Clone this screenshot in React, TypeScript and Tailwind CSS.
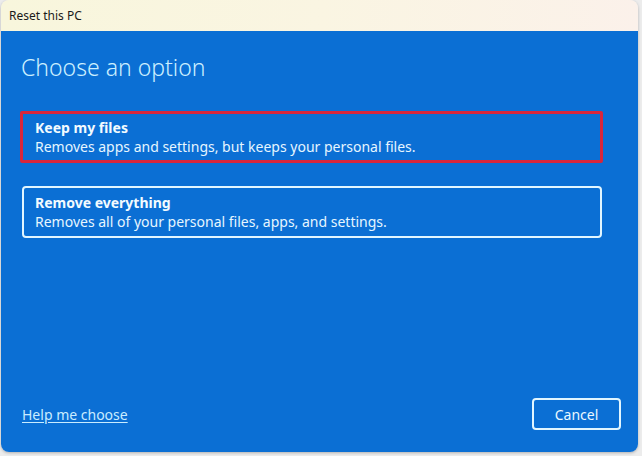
import React from 'react';

const font = { fontFamily: '"Noto Sans", "Open Sans", sans-serif' };

type OptionProps = {
  title: string;
  description: string;
  selected?: boolean;
};

// One choice card in the dialog
const OptionCard: React.FC<OptionProps> = ({ title, description, selected }) => (
  <button
    className={
      selected
        ? 'w-[583px] h-[52px] -ml-px text-left flex flex-col justify-center pl-[12px] border-[3px] border-[#d8263c] rounded-[2px]'
        : 'w-[580px] h-[52px] ml-px text-left flex flex-col justify-center pl-[11px] border-2 border-[#e2f6ff] rounded-[4px]'
    }
  >
    <span className="text-[14px] leading-[19px] font-bold text-[#f2fbff]">{title}</span>
    <span className="text-[14px] leading-[19px] text-[#e6f6ff]">{description}</span>
  </button>
);

export default function App() {
  return (
    <div className="w-[642px] h-[456px] bg-[#ececec] overflow-hidden" style={font}>
      <div className="ml-px w-[637px] h-[452px] flex flex-col rounded-t-[8px] rounded-b-[8px] overflow-hidden shadow-[0_1px_3px_rgba(0,0,0,0.25)]">
        {/* Title bar */}
        <div className="h-[31px] flex items-center pl-[8px] bg-gradient-to-r from-[#f8f6dc] via-[#faf5e2] to-[#fbf1ea]">
          <span className="text-[12px] text-[#1a1a1a]">Reset this PC</span>
        </div>

        {/* Dialog body */}
        <div className="flex-1 bg-[#0b6fd4] flex flex-col">
          <div className="px-[20px]">
            <h1 className="mt-[20px] text-[23px] leading-[32px] font-light text-[#cdefff]">
              Choose an option
            </h1>

            <div className="mt-[28px] flex flex-col gap-[23px]">
              <OptionCard
                selected
                title="Keep my files"
                description="Removes apps and settings, but keeps your personal files."
              />
              <OptionCard
                title="Remove everything"
                description="Removes all of your personal files, apps, and settings."
              />
            </div>
          </div>

          <div className="mt-auto mb-[22px] flex items-center justify-between pl-[21px] pr-[17px]">
            <a href="#" className="text-[14px] text-[#c9ecff] underline underline-offset-2">
              Help me choose
            </a>
            <button className="w-[89px] h-[32px] border-2 border-[#e2f6ff] rounded-[4px] text-[14px] text-[#eaf8ff]">
              Cancel
            </button>
          </div>
        </div>
      </div>
    </div>
  );
}
